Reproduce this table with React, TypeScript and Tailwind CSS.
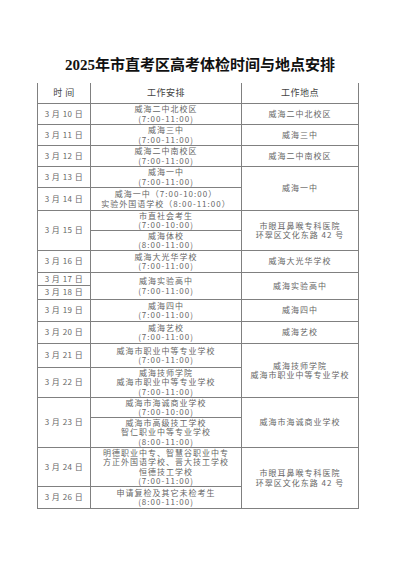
import React from 'react';

type Row = {
  h: number;
  date?: string;
  dateSpan?: number;
  work?: string[];
  workSpan?: number;
  place?: string[];
  placeSpan?: number;
};

const T1 = '(7:00-11:00)';
const T2 = '(7:00-10:00)';
const T3 = '(8:00-11:00)';

const rows: Row[] = [
  { h: 21, date: '3 月 10 日', work: ['威海二中北校区', T1], place: ['威海二中北校区'] },
  { h: 21, date: '3 月 11 日', work: ['威海三中', T1], place: ['威海三中'] },
  { h: 21, date: '3 月 12 日', work: ['威海二中南校区', T1], place: ['威海二中南校区'] },
  { h: 21, date: '3 月 13 日', work: ['威海一中', T1], place: ['威海一中'], placeSpan: 2 },
  { h: 23, date: '3 月 14 日', work: ['威海一中（7:00-10:00）', '实验外国语学校（8:00-11:00）'] },
  { h: 19, date: '3 月 15 日', dateSpan: 2, work: ['市直社会考生', T2], place: ['市眼耳鼻喉专科医院', '环翠区文化东路 42 号'], placeSpan: 2 },
  { h: 20, work: ['威海体校', T3] },
  { h: 22, date: '3 月 16 日', work: ['威海大光华学校', T1], place: ['威海大光华学校'] },
  { h: 13, date: '3 月 17 日', work: ['威海实验高中', T1], workSpan: 2, place: ['威海实验高中'], placeSpan: 2 },
  { h: 14, date: '3 月 18 日' },
  { h: 22, date: '3 月 19 日', work: ['威海四中', T1], place: ['威海四中'] },
  { h: 22, date: '3 月 20 日', work: ['威海艺校', T1], place: ['威海艺校'] },
  { h: 24, date: '3 月 21 日', work: ['威海市职业中等专业学校', T1], place: ['威海技师学院', '威海市职业中等专业学校'], placeSpan: 2 },
  { h: 30, date: '3 月 22 日', work: ['威海技师学院', '威海市职业中等专业学校', T1] },
  { h: 20, date: '3 月 23 日', dateSpan: 2, work: ['威海市海诚商业学校', T2], place: ['威海市海诚商业学校'], placeSpan: 2 },
  { h: 30, work: ['威海市高级技工学校', '智仁职业中等专业学校', T3] },
  { h: 38, date: '3 月 24 日', work: ['明德职业中专、智慧谷职业中专', '方正外国语学校、晋大技工学校', '恒德技工学校', T1], place: ['市眼耳鼻喉专科医院', '环翠区文化东路 42 号'], placeSpan: 2 },
  { h: 22, date: '3 月 26 日', work: ['申请复检及其它未检考生', T3] },
];

const cell = 'border border-[#808080] p-0 text-center align-middle';

const Lines = ({ lines }: { lines: string[] }) => (
  <>
    {lines.map((l, i) => (
      <div key={i} className="whitespace-nowrap">{l}</div>
    ))}
  </>
);

export default function App() {
  return (
    <div className="w-[400px] h-[565px] bg-white pt-[55px]" style={{ fontFamily: '"Noto Sans CJK SC", sans-serif' }}>
      <h1
        className="text-center text-[15px] font-bold leading-[20px] text-[#111] mb-[8px]"
        style={{ fontFamily: '"Liberation Serif", "Noto Sans CJK SC", serif' }}
      >
        2025年市直考区高考体检时间与地点安排
      </h1>
      <table className="ml-[37px] w-[321px] table-fixed border-collapse text-[8px] leading-[9.5px] tracking-[1px] text-[#666]">
        <colgroup>
          <col className="w-[53px]" />
          <col className="w-[151px]" />
          <col className="w-[117px]" />
        </colgroup>
        <tbody>
          <tr className="h-[20px] text-[9px] text-[#444] tracking-[0.5px]">
            <td className={`${cell} border-t-0`}>时 间</td>
            <td className={`${cell} border-t-0`}>工作安排</td>
            <td className={`${cell} border-t-0`}>工作地点</td>
          </tr>
          {rows.map((r, i) => (
            <tr key={i} style={{ height: r.h }}>
              {r.date && (
                <td className={`${cell} tracking-[0.5px]`} rowSpan={r.dateSpan}>
                  {r.date}
                </td>
              )}
              {r.work && (
                <td className={cell} rowSpan={r.workSpan}>
                  <Lines lines={r.work} />
                </td>
              )}
              {r.place && (
                <td className={cell} rowSpan={r.placeSpan}>
                  <Lines lines={r.place} />
                </td>
              )}
            </tr>
          ))}
        </tbody>
      </table>
    </div>
  );
}
